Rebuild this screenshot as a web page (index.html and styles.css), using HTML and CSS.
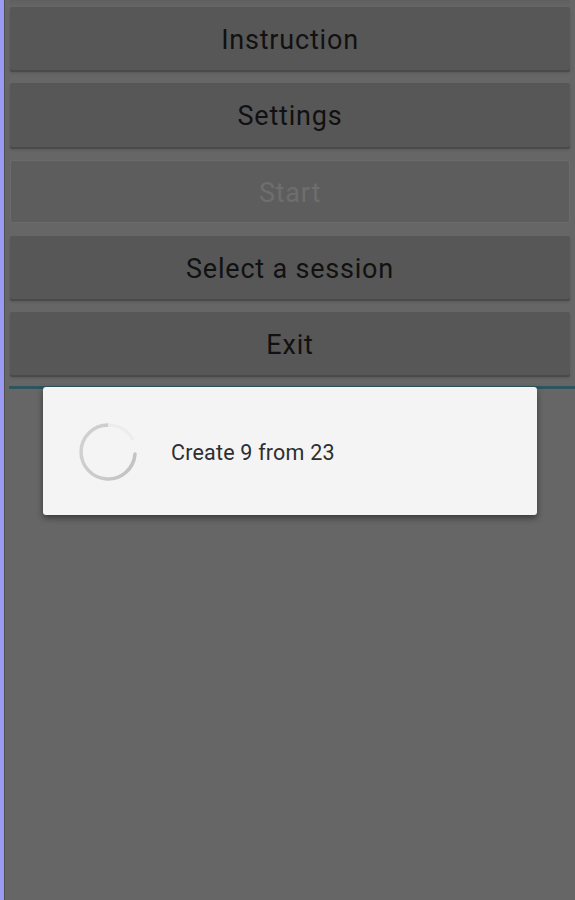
FILE: index.html
```html
<!DOCTYPE html>
<html lang="en">
<head>
    <meta charset="UTF-8">
    <meta name="viewport" content="width=device-width, initial-scale=1.0">
    <title>Menu</title>
    <link rel="stylesheet" href="styles.css">
</head>
<body>
    <div class="screen">
        <div class="edge"></div>
        <div class="main">
            <div class="menu">
                <button class="menu-btn">Instruction</button>
                <button class="menu-btn">Settings</button>
                <button class="menu-btn" disabled>Start</button>
                <button class="menu-btn">Select a session</button>
                <button class="menu-btn">Exit</button>
            </div>
            <div class="divider"></div>
        </div>

        <div class="progress-dialog">
            <svg class="spinner" width="62" height="62" viewBox="0 0 62 62">
                <defs>
                    <linearGradient id="fade" x1="0" y1="0" x2="1" y2="0.4">
                        <stop offset="0" stop-color="#d2d2d2"/>
                        <stop offset="1" stop-color="#c4c4c4"/>
                    </linearGradient>
                </defs>
                <path d="M31 4 A27 27 0 1 0 58 33" fill="none" stroke="url(#fade)" stroke-width="3.5" stroke-linecap="round"/>
                <path d="M31 4 A27 27 0 0 1 56 19" fill="none" stroke="#ececec" stroke-width="3"/>
            </svg>
            <span class="progress-text">Create 9 from 23</span>
        </div>
    </div>
</body>
</html>
```

FILE: styles.css
```css
:root {
    --bg: #666666;
    --btn: #575757;
    --edge: #9a9af2;
}

body {
    margin: 0;
    padding: 0;
    background: var(--bg);
    font-family: Roboto, 'Noto Sans', sans-serif;
}

.screen {
    position: relative;
    display: flex;
    min-height: 900px;
}

.edge {
    width: 4px;
    background: var(--edge);
    border-right: 1px solid #505050;
    flex-shrink: 0;
}

.main {
    flex: 1;
    padding: 0 5px;
    background: var(--bg);
}

.menu {
    display: flex;
    flex-direction: column;
    gap: 13px;
    padding-top: 7px;
    background: linear-gradient(#5f5f5f, var(--bg) 7px);
}

.menu-btn {
    height: 63.3px;
    background: var(--btn);
    border: none;
    border-radius: 2px;
    box-shadow: 0 2px 0 #4a4a4a, 0 3px 3px rgba(0, 0, 0, 0.15);
    color: #111;
    font-family: Roboto, 'Noto Sans', sans-serif;
    font-size: 27px;
    letter-spacing: 0.8px;
    padding: 3px 0 0;
}

.menu-btn:disabled {
    background: #5d5d5d;
    border: 1px solid #6b6b6b;
    box-shadow: none;
    color: #6e6e6e;
}

.divider {
    height: 3px;
    margin: 11px -5px 0 -1px;
    background: #2c5560;
}

.progress-dialog {
    position: absolute;
    left: 43px;
    top: 387px;
    width: 494px;
    height: 128px;
    background: #f4f4f4;
    border-radius: 3px;
    box-shadow: 0 3px 6px rgba(0, 0, 0, 0.45);
    display: flex;
    align-items: center;
    box-sizing: border-box;
    padding-left: 34px;
}

.spinner {
    display: block;
    margin-top: 1px;
}

.progress-text {
    margin-left: 32px;
    margin-top: 2px;
    font-size: 21.5px;
    letter-spacing: 0.2px;
    color: #2e2e2e;
}
```
